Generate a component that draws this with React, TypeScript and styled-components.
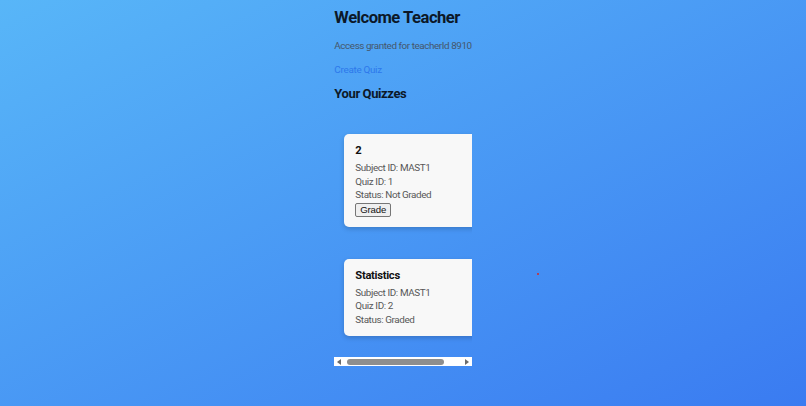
import React from "react";
import styled, { createGlobalStyle } from "styled-components";

const Global = createGlobalStyle`
  html, body { margin: 0; padding: 0; }
  body { font-family: Roboto, "Liberation Sans", sans-serif; }
`;

const Page = styled.div`
  position: relative;
  min-height: 100vh;
  background: linear-gradient(to bottom right, #58b6f8, #3a7bf1);
  overflow: hidden;
`;

const Column = styled.div`
  width: fit-content;
  margin: 0 auto;
  display: flex;
  flex-direction: column;
  align-items: flex-start;
`;

const Title = styled.h1`
  margin: 8px 0 0;
  font-size: 16.6px;
  line-height: 20px;
  letter-spacing: -0.5px;
  font-weight: 700;
  color: #0c1828;
`;

const Info = styled.p`
  margin: 11px 0 0;
  font-size: 9.9px;
  letter-spacing: -0.43px;
  line-height: 14px;
  color: #45566b;
`;

const CreateLink = styled.a`
  margin-top: 10px;
  font-size: 9.9px;
  letter-spacing: -0.3px;
  line-height: 14px;
  color: #2d78eb;
  text-decoration: none;
`;

const SectionTitle = styled.h2`
  margin: 9px 0 0;
  font-size: 13px;
  letter-spacing: -0.4px;
  line-height: 16px;
  font-weight: 700;
  color: #0c1828;
`;

const Scroller = styled.div`
  margin-top: 16px;
  width: 0;
  min-width: 100%;
  overflow-x: auto;
  overflow-y: hidden;
  scrollbar-width: none;
`;

const CardList = styled.div`
  display: flex;
  flex-direction: column;
  gap: 32px;
  width: max-content;
  padding: 16px 10px 21px;
`;

const Card = styled.div`
  width: 150px;
  box-sizing: border-box;
  padding: 10px 11px 10px;
  background: #f8f8f8;
  border-radius: 5px;
  box-shadow: 0 2px 5px rgba(0, 0, 0, 0.18);
`;

const CardTitle = styled.h3`
  margin: 0 0 3px;
  font-size: 11.2px;
  letter-spacing: -0.3px;
  line-height: 14px;
  font-weight: 700;
  color: #111;
`;

const CardLine = styled.p`
  margin: 0;
  font-size: 9.9px;
  letter-spacing: -0.4px;
  line-height: 13.5px;
  color: #575757;
`;

const GradeButton = styled.button`
  display: block;
  margin-top: 1px;
  padding: 0 4px;
  height: 14px;
  font-family: "Liberation Sans", Arial, sans-serif;
  font-size: 9.6px;
  letter-spacing: -0.2px;
  line-height: 12px;
  color: #111;
  background: #efefef;
  border: 1px solid #767676;
  border-radius: 2px;
`;

const ScrollBar = styled.div`
  width: 0;
  min-width: 100%;
  height: 9px;
  display: flex;
  align-items: center;
  background: #ffffff;
`;

const Arrow = styled.span<{ $dir: "left" | "right" }>`
  flex: none;
  width: 10px;
  display: flex;
  justify-content: center;
  &::before {
    content: "";
    border-top: 3.5px solid transparent;
    border-bottom: 3.5px solid transparent;
    ${(p) =>
      p.$dir === "left"
        ? "border-right: 4px solid #6b6b6b;"
        : "border-left: 4px solid #6b6b6b;"}
  }
`;

const Track = styled.div`
  flex: 1;
  height: 100%;
  display: flex;
  align-items: center;
`;

const Thumb = styled.div`
  margin-left: 3px;
  width: 97px;
  height: 6px;
  border-radius: 3px;
  background: #8e8e8e;
`;

const Dot = styled.span`
  position: absolute;
  left: 537px;
  top: 273px;
  width: 2px;
  height: 2px;
  background: #b0405a;
`;

type Quiz = { title: string; subject: string; id: number; graded: boolean };

const quizzes: Quiz[] = [
  { title: "2", subject: "MAST1", id: 1, graded: false },
  { title: "Statistics", subject: "MAST1", id: 2, graded: true },
];

export default function App() {
  return (
    <Page>
      <Global />
      <Column>
        <Title>Welcome Teacher</Title>
        <Info>Access granted for teacherId 8910</Info>
        <CreateLink href="#">Create Quiz</CreateLink>
        <SectionTitle>Your Quizzes</SectionTitle>
        <Scroller>
          <CardList>
            {quizzes.map((q) => (
              <Card key={q.id}>
                <CardTitle>{q.title}</CardTitle>
                <CardLine>Subject ID: {q.subject}</CardLine>
                <CardLine>Quiz ID: {q.id}</CardLine>
                <CardLine>Status: {q.graded ? "Graded" : "Not Graded"}</CardLine>
                {!q.graded && <GradeButton>Grade</GradeButton>}
              </Card>
            ))}
          </CardList>
        </Scroller>
        <ScrollBar>
          <Arrow $dir="left" />
          <Track>
            <Thumb />
          </Track>
          <Arrow $dir="right" />
        </ScrollBar>
      </Column>
      <Dot />
    </Page>
  );
}
